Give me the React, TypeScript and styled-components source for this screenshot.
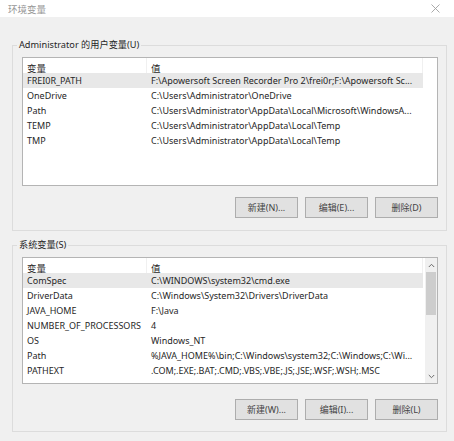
import React from "react";
import styled, { createGlobalStyle } from "styled-components";

const Global = createGlobalStyle`
  html, body { margin: 0; padding: 0; background: #f0f0f0; }
  body {
    font-family: "Noto Sans", "Noto Sans CJK SC", sans-serif;
    font-size: 9px;
    color: #262626;
  }
  * { box-sizing: border-box; }
`;

const Window = styled.div`
  width: 454px;
  height: 441px;
  background: #f0f0f0;
  display: flex;
  flex-direction: column;
  overflow: hidden;
`;

const TitleBar = styled.div`
  height: 17px;
  background: #ffffff;
  display: flex;
  align-items: center;
  justify-content: space-between;
  padding: 0 14px 0 8px;
  color: #969696;
  font-size: 9.5px;
  font-family: "Noto Sans CJK SC", sans-serif;
`;

const Body = styled.div`
  display: flex;
  flex-direction: column;
  gap: 7px;
  padding: 21px 7px 0 12px;
`;

const Group = styled.fieldset<{ $pb: number }>`
  margin: 0;
  min-width: 0;
  border: 1px solid #dcdcdc;
  padding: 5px 8px ${(p) => p.$pb}px 9px;
  display: flex;
  flex-direction: column;
`;

const Legend = styled.legend`
  padding: 0 2px;
  margin-left: -5px;
  line-height: 14px;
  font-size: 9.2px;
  color: #262626;
`;

const ListBox = styled.div<{ $h: number }>`
  height: ${(p) => p.$h}px;
  border: 1px solid #b4b4b4;
  background: #ffffff;
  display: flex;
  overflow: hidden;
`;

const Table = styled.div`
  width: 400px;
  display: grid;
  grid-template-columns: 124px 276px;
  grid-auto-rows: 15px;
  align-content: start;
`;

const Header = styled.div`
  grid-column: 1 / 3;
  display: grid;
  grid-template-columns: 124px 276px;
  height: 19px;
`;

const HeadCell = styled.div`
  height: 19px;
  display: flex;
  align-items: center;
  padding: 0 4px;
  border-right: 1px solid #f0f0f0;
  font-size: 9.5px;
  font-family: "Noto Sans CJK SC", sans-serif;
`;

const RowGroup = styled.div`
  display: contents;
`;

const Cell = styled.div<{ $sel?: boolean }>`
  height: 15px;
  line-height: 15px;
  padding: 0 4px;
  white-space: nowrap;
  overflow: hidden;
  background: ${(p) => (p.$sel ? "#e8e8e8" : "transparent")};
`;

const Scrollbar = styled.div`
  margin-left: auto;
  width: 12px;
  display: flex;
  flex-direction: column;
  background: #f0f0f0;
`;

const Arrow = styled.div`
  height: 14px;
  display: flex;
  align-items: center;
  justify-content: center;
`;

const Thumb = styled.div`
  height: 43px;
  margin: 0 1px;
  background: #cdcdcd;
`;

const Track = styled.div`
  flex: 1;
`;

const ButtonRow = styled.div<{ $mt: number }>`
  margin-top: ${(p) => p.$mt}px;
  display: flex;
  justify-content: flex-end;
  gap: 7px;
`;

const Button = styled.button`
  width: 63px;
  height: 21px;
  padding: 0;
  border: 1px solid #adadad;
  background: #e1e1e1;
  color: #444444;
  font-family: "Noto Sans", "Noto Sans CJK SC", sans-serif;
  font-size: 9px;
`;

const Close = styled.svg`
  width: 9px;
  height: 9px;
`;

type Row = [string, string];

const userVars: Row[] = [
  ["FREI0R_PATH", "F:\\Apowersoft Screen Recorder Pro 2\\frei0r;F:\\Apowersoft Sc..."],
  ["OneDrive", "C:\\Users\\Administrator\\OneDrive"],
  ["Path", "C:\\Users\\Administrator\\AppData\\Local\\Microsoft\\WindowsA..."],
  ["TEMP", "C:\\Users\\Administrator\\AppData\\Local\\Temp"],
  ["TMP", "C:\\Users\\Administrator\\AppData\\Local\\Temp"],
];

const sysVars: Row[] = [
  ["ComSpec", "C:\\WINDOWS\\system32\\cmd.exe"],
  ["DriverData", "C:\\Windows\\System32\\Drivers\\DriverData"],
  ["JAVA_HOME", "F:\\Java"],
  ["NUMBER_OF_PROCESSORS", "4"],
  ["OS", "Windows_NT"],
  ["Path", "%JAVA_HOME%\\bin;C:\\Windows\\system32;C:\\Windows;C:\\Wi..."],
  ["PATHEXT", ".COM;.EXE;.BAT;.CMD;.VBS;.VBE;.JS;.JSE;.WSF;.WSH;.MSC"],
];

const VarTable = ({ rows }: { rows: Row[] }) => (
  <Table>
    <Header>
      <HeadCell>变量</HeadCell>
      <HeadCell>值</HeadCell>
    </Header>
    {rows.map(([k, v], i) => (
      <RowGroup key={k + i}>
        <Cell $sel={i === 0}>{k}</Cell>
        <Cell $sel={i === 0}>{v}</Cell>
      </RowGroup>
    ))}
  </Table>
);

const Chevron = ({ up }: { up?: boolean }) => (
  <svg width="7" height="5" viewBox="0 0 7 5">
    <path
      d={up ? "M0.8 4 L3.5 1.3 L6.2 4" : "M0.8 1 L3.5 3.7 L6.2 1"}
      fill="none"
      stroke="#6a6a6a"
      strokeWidth="1"
    />
  </svg>
);

export default function App() {
  return (
    <Window>
      <Global />
      <TitleBar>
        <span>环境变量</span>
        <Close viewBox="0 0 9 9">
          <path d="M0.5 0.5 L8.5 8.5 M8.5 0.5 L0.5 8.5" stroke="#a0a0a0" strokeWidth="0.9" />
        </Close>
      </TitleBar>
      <Body>
        <Group $pb={12}>
          <Legend>Administrator 的用户变量(U)</Legend>
          <ListBox $h={129}>
            <VarTable rows={userVars} />
          </ListBox>
          <ButtonRow $mt={11}>
            <Button>新建(N)...</Button>
            <Button>编辑(E)...</Button>
            <Button>删除(D)</Button>
          </ButtonRow>
        </Group>
        <Group $pb={11}>
          <Legend>系统变量(S)</Legend>
          <ListBox $h={127}>
            <VarTable rows={sysVars} />
            <Scrollbar>
              <Arrow>
                <Chevron up />
              </Arrow>
              <Thumb />
              <Track />
              <Arrow>
                <Chevron />
              </Arrow>
            </Scrollbar>
          </ListBox>
          <ButtonRow $mt={15}>
            <Button>新建(W)...</Button>
            <Button>编辑(I)...</Button>
            <Button>删除(L)</Button>
          </ButtonRow>
        </Group>
      </Body>
    </Window>
  );
}
